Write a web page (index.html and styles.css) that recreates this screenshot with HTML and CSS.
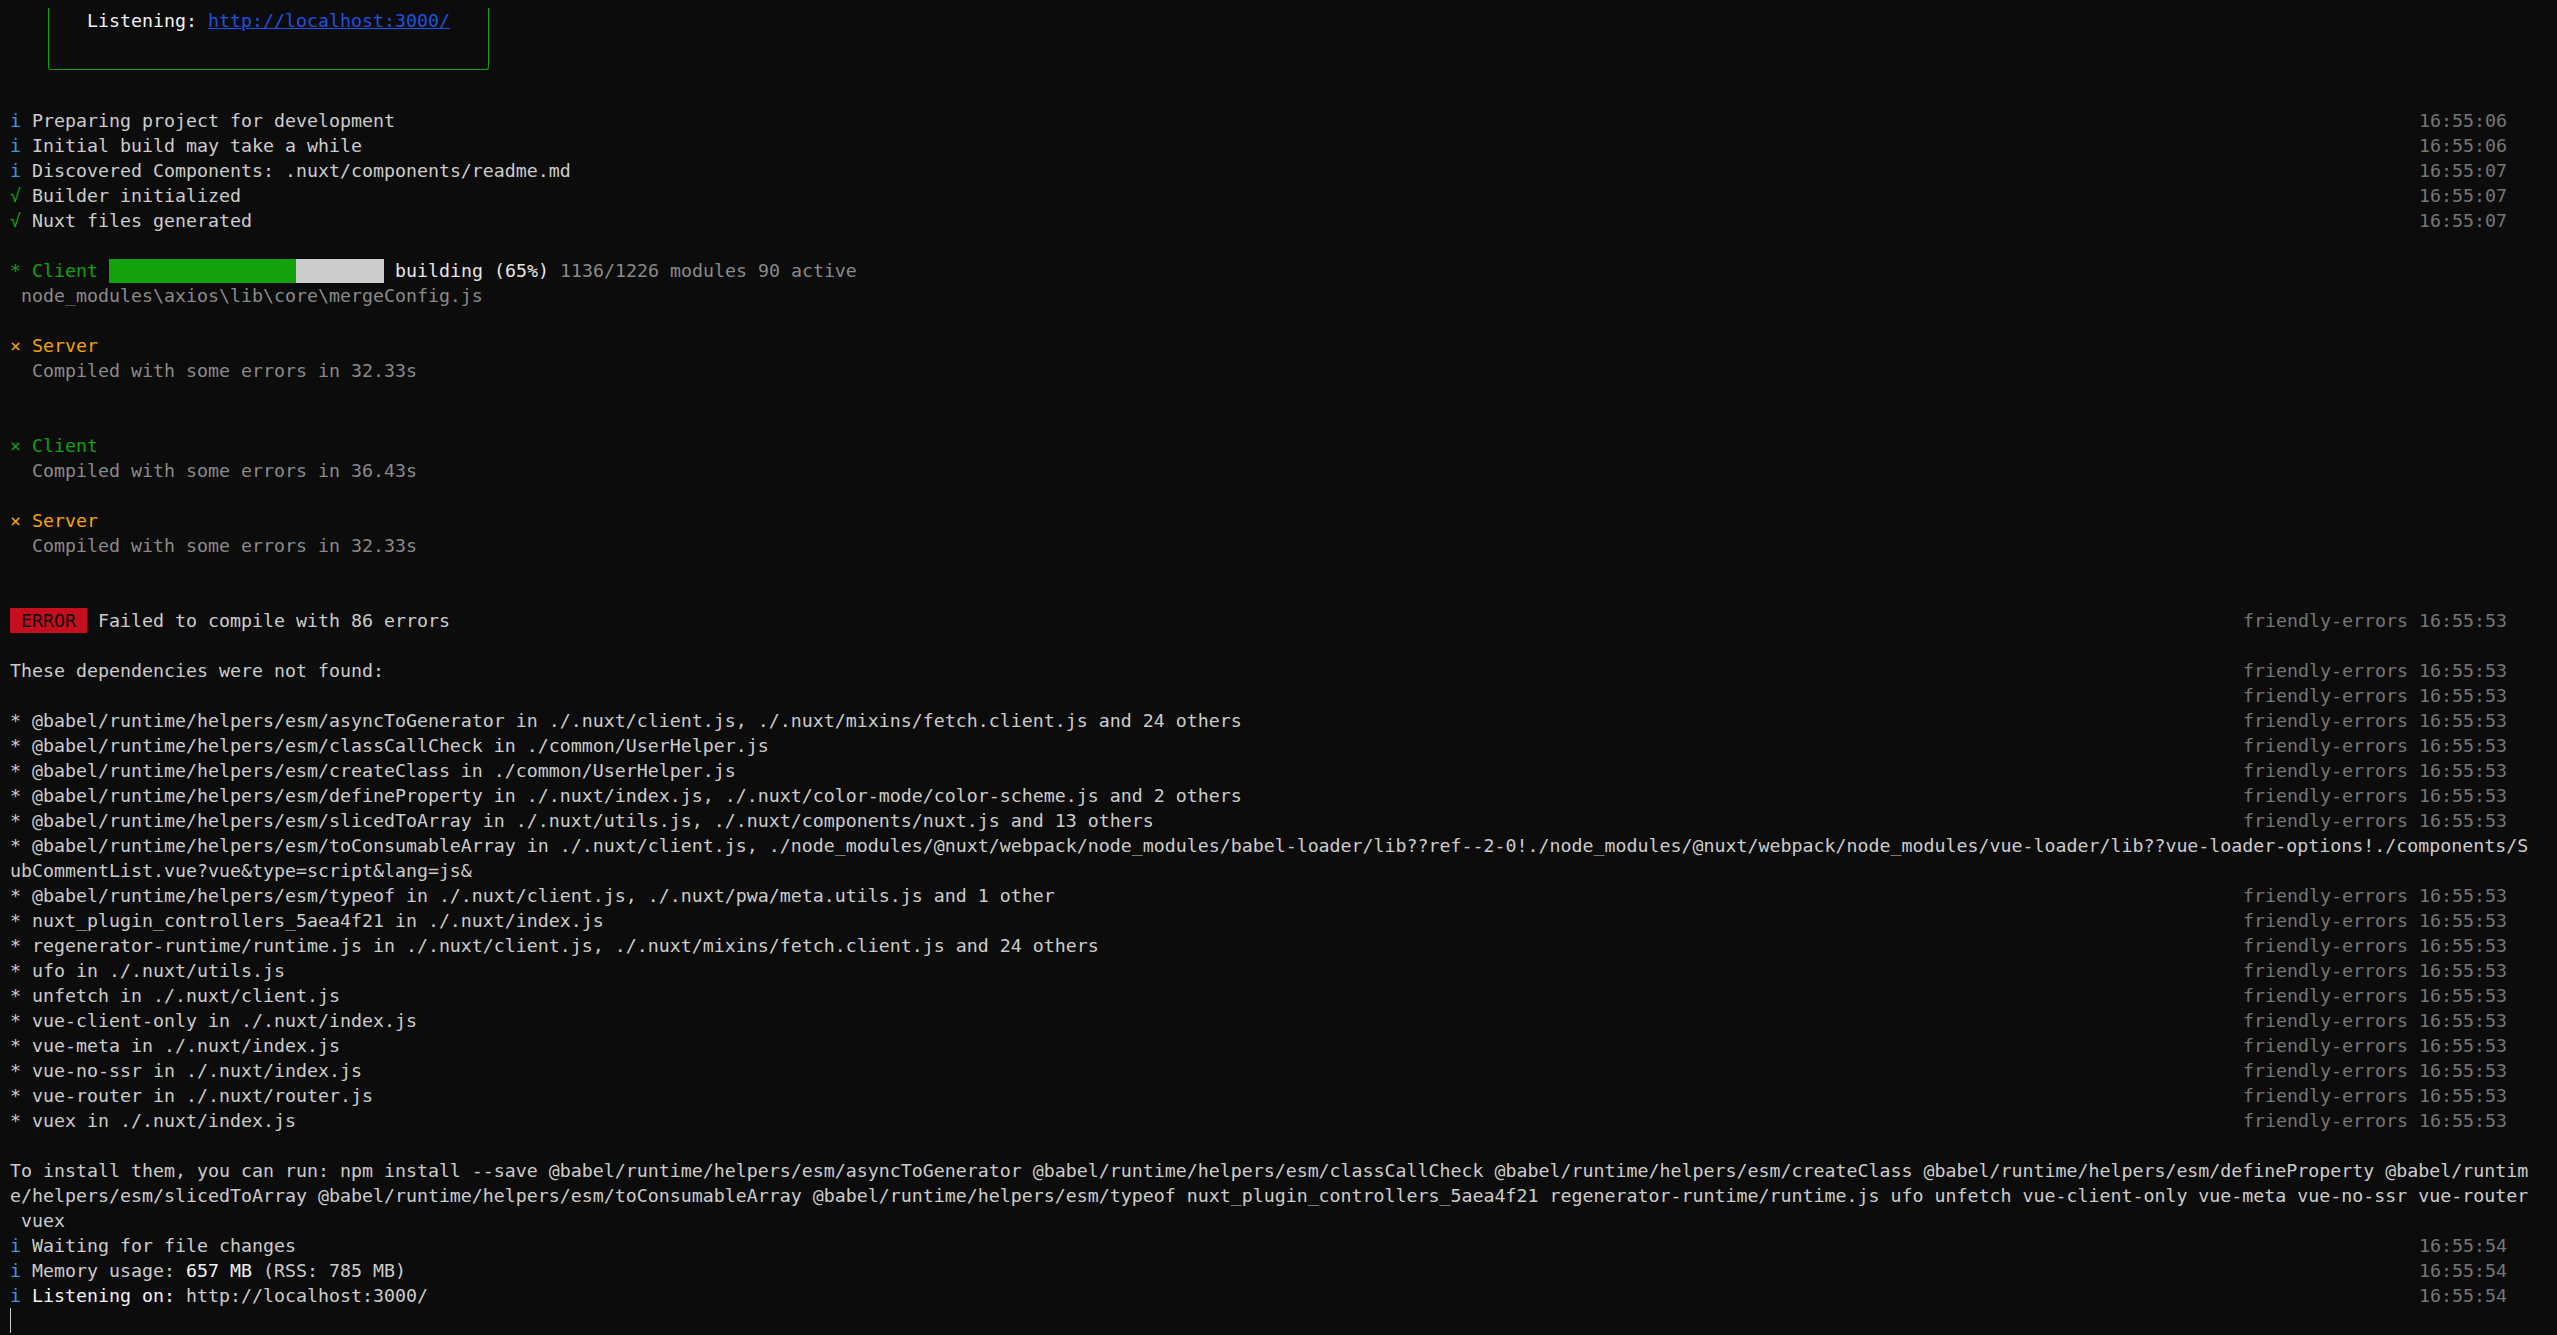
FILE: index.html
```html
<!DOCTYPE html>
<html lang="en">
<head>
    <meta charset="UTF-8">
    <meta name="viewport" content="width=device-width, initial-scale=1.0">
    <title>nuxt dev</title>
    <link rel="stylesheet" href="styles.css">
</head>
<body>

<div class="terminal">
    <!-- banner box (top part scrolled away) -->
    <div class="box">
        <div class="line"><span><span class="bright">Listening:</span> <a class="link" href="#">http://localhost:3000/</a></span></div>
    </div>

    <div class="line"></div>
    <div class="line"><span><span class="info">i</span> Preparing project for development</span><span class="ts">16:55:06</span></div>
    <div class="line"><span><span class="info">i</span> Initial build may take a while</span><span class="ts">16:55:06</span></div>
    <div class="line"><span><span class="info">i</span> Discovered Components: .nuxt/components/readme.md</span><span class="ts">16:55:07</span></div>
    <div class="line"><span><span class="green">√</span> Builder initialized</span><span class="ts">16:55:07</span></div>
    <div class="line"><span><span class="green">√</span> Nuxt files generated</span><span class="ts">16:55:07</span></div>
    <div class="line"></div>

    <!-- webpackbar -->
    <div class="line"><span><span class="green">* Client</span> <span class="bar bar-done"></span><span class="bar bar-todo"></span> <span class="light">building (65%)</span> <span class="dim">1136/1226 modules 90 active</span></span></div>
    <div class="line"><span class="dim"> node_modules\axios\lib\core\mergeConfig.js</span></div>
    <div class="line"></div>
    <div class="line"><span class="orange">× Server</span></div>
    <div class="line"><span class="dim">  Compiled with some errors in 32.33s</span></div>
    <div class="line"></div>
    <div class="line"></div>
    <div class="line"><span class="green">× Client</span></div>
    <div class="line"><span class="dim">  Compiled with some errors in 36.43s</span></div>
    <div class="line"></div>
    <div class="line"><span class="orange">× Server</span></div>
    <div class="line"><span class="dim">  Compiled with some errors in 32.33s</span></div>
    <div class="line"></div>
    <div class="line"></div>

    <!-- errors -->
    <div class="line"><span><span class="badge"> ERROR </span> Failed to compile with 86 errors</span><span class="ts">friendly-errors 16:55:53</span></div>
    <div class="line"></div>
    <div class="line"><span>These dependencies were not found:</span><span class="ts">friendly-errors 16:55:53</span></div>
    <div class="line"><span></span><span class="ts">friendly-errors 16:55:53</span></div>
    <div class="line"><span>* @babel/runtime/helpers/esm/asyncToGenerator in ./.nuxt/client.js, ./.nuxt/mixins/fetch.client.js and 24 others</span><span class="ts">friendly-errors 16:55:53</span></div>
    <div class="line"><span>* @babel/runtime/helpers/esm/classCallCheck in ./common/UserHelper.js</span><span class="ts">friendly-errors 16:55:53</span></div>
    <div class="line"><span>* @babel/runtime/helpers/esm/createClass in ./common/UserHelper.js</span><span class="ts">friendly-errors 16:55:53</span></div>
    <div class="line"><span>* @babel/runtime/helpers/esm/defineProperty in ./.nuxt/index.js, ./.nuxt/color-mode/color-scheme.js and 2 others</span><span class="ts">friendly-errors 16:55:53</span></div>
    <div class="line"><span>* @babel/runtime/helpers/esm/slicedToArray in ./.nuxt/utils.js, ./.nuxt/components/nuxt.js and 13 others</span><span class="ts">friendly-errors 16:55:53</span></div>
    <div class="line"><span>* @babel/runtime/helpers/esm/toConsumableArray in ./.nuxt/client.js, ./node_modules/@nuxt/webpack/node_modules/babel-loader/lib??ref--2-0!./node_modules/@nuxt/webpack/node_modules/vue-loader/lib??vue-loader-options!./components/S</span></div>
    <div class="line"><span>ubCommentList.vue?vue&amp;type=script&amp;lang=js&amp;</span></div>
    <div class="line"><span>* @babel/runtime/helpers/esm/typeof in ./.nuxt/client.js, ./.nuxt/pwa/meta.utils.js and 1 other</span><span class="ts">friendly-errors 16:55:53</span></div>
    <div class="line"><span>* nuxt_plugin_controllers_5aea4f21 in ./.nuxt/index.js</span><span class="ts">friendly-errors 16:55:53</span></div>
    <div class="line"><span>* regenerator-runtime/runtime.js in ./.nuxt/client.js, ./.nuxt/mixins/fetch.client.js and 24 others</span><span class="ts">friendly-errors 16:55:53</span></div>
    <div class="line"><span>* ufo in ./.nuxt/utils.js</span><span class="ts">friendly-errors 16:55:53</span></div>
    <div class="line"><span>* unfetch in ./.nuxt/client.js</span><span class="ts">friendly-errors 16:55:53</span></div>
    <div class="line"><span>* vue-client-only in ./.nuxt/index.js</span><span class="ts">friendly-errors 16:55:53</span></div>
    <div class="line"><span>* vue-meta in ./.nuxt/index.js</span><span class="ts">friendly-errors 16:55:53</span></div>
    <div class="line"><span>* vue-no-ssr in ./.nuxt/index.js</span><span class="ts">friendly-errors 16:55:53</span></div>
    <div class="line"><span>* vue-router in ./.nuxt/router.js</span><span class="ts">friendly-errors 16:55:53</span></div>
    <div class="line"><span>* vuex in ./.nuxt/index.js</span><span class="ts">friendly-errors 16:55:53</span></div>
    <div class="line"></div>
    <div class="line"><span>To install them, you can run: npm install --save @babel/runtime/helpers/esm/asyncToGenerator @babel/runtime/helpers/esm/classCallCheck @babel/runtime/helpers/esm/createClass @babel/runtime/helpers/esm/defineProperty @babel/runtim</span></div>
    <div class="line"><span>e/helpers/esm/slicedToArray @babel/runtime/helpers/esm/toConsumableArray @babel/runtime/helpers/esm/typeof nuxt_plugin_controllers_5aea4f21 regenerator-runtime/runtime.js ufo unfetch vue-client-only vue-meta vue-no-ssr vue-router</span></div>
    <div class="line"><span> vuex</span></div>

    <!-- ready -->
    <div class="line"><span><span class="info">i</span> Waiting for file changes</span><span class="ts">16:55:54</span></div>
    <div class="line"><span><span class="info">i</span> Memory usage: <span class="bright">657 MB</span> (RSS: 785 MB)</span><span class="ts">16:55:54</span></div>
    <div class="line"><span><span class="info">i</span> <span class="bright">Listening on:</span> http://localhost:3000/</span><span class="ts">16:55:54</span></div>
    <div class="line"><span class="cursor"></span></div>
</div>

</body>
</html>
```

FILE: styles.css
```css
html, body {
    margin: 0;
    height: 100%;
    background-color: #0c0c0c;
    overflow: hidden;
}

.terminal {
    padding: 8px 0 0 10px;
    font-family: 'DejaVu Sans Mono', 'Liberation Mono', monospace;
    font-size: 18.27px;
    color: #cccccc;
}

/* one terminal row = 25px, right column ends at col 227 */
.line {
    display: flex;
    justify-content: space-between;
    width: 2497px;
    height: 25px;
    line-height: 25px;
    white-space: pre;
}

/* Banner box */
.box {
    box-sizing: border-box;
    width: 441px;
    height: 62px;
    margin: 0 0 13px 38px;
    padding-left: 38px;
    border: 1px solid #13a10e;
    border-top: none;
    border-radius: 0 0 3px 3px;
}

.box .line {
    width: auto;
}

.link {
    color: #1f52e0;
    text-decoration: underline;
}

/* Colors */
.info {
    color: #3a96dd;
}

.green {
    color: #13a10e;
}

.orange {
    color: #f5a300;
}

.bright {
    color: #f2f2f2;
}

.light {
    color: #e6e6e6;
}

.dim {
    color: #8a8a8a;
}

.ts {
    color: #767676;
}

/* Progress bar */
.bar {
    display: inline-block;
    height: 24px;
    margin-top: 1px;
    vertical-align: top;
}

.bar-done {
    width: 187px;
    background-color: #13a10e;
}

.bar-todo {
    width: 88px;
    background-color: #cccccc;
}

/* ERROR badge */
.badge {
    display: inline-block;
    height: 25px;
    vertical-align: top;
    background-color: #c50f1f;
    color: #0c0c0c;
}

.cursor {
    display: inline-block;
    width: 1px;
    height: 25px;
    vertical-align: top;
    background-color: #cccccc;
}
```
